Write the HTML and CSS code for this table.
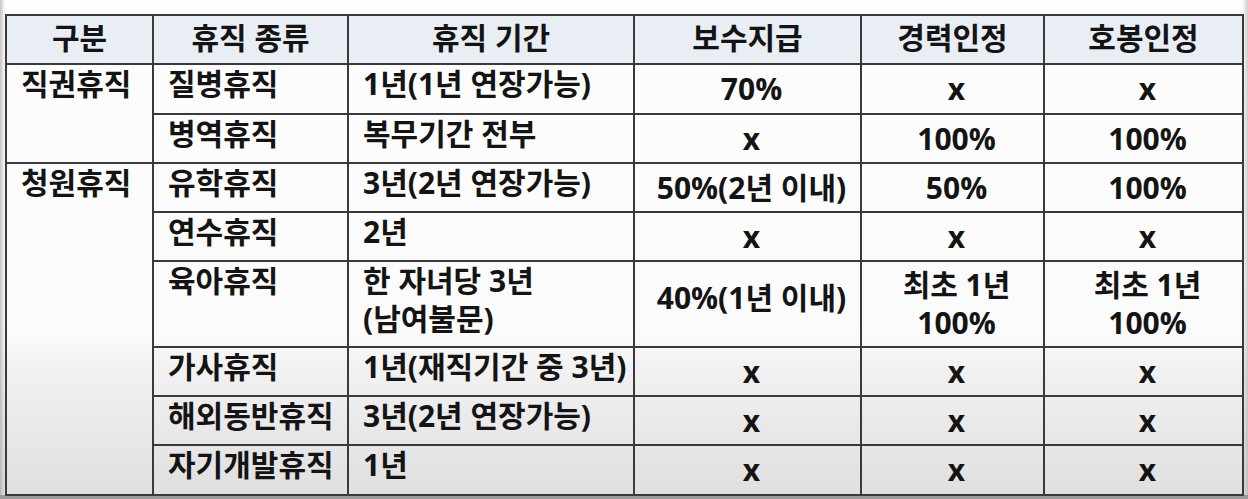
FILE: index.html
```html
<!DOCTYPE html>
<html lang="ko">
<head>
<meta charset="utf-8">
<link rel="stylesheet" href="styles.css">
</head>
<body>
<table class="leave">
  <colgroup>
    <col class="c1"><col class="c2"><col class="c3"><col class="c4"><col class="c5"><col class="c6">
  </colgroup>
  <thead>
    <tr class="r-h">
      <th>구분</th><th>휴직 종류</th><th>휴직 기간</th><th>보수지급</th><th>경력인정</th><th>호봉인정</th>
    </tr>
  </thead>
  <tbody>
    <tr class="r50">
      <td class="cat" rowspan="2">직권휴직</td><td class="name">질병휴직</td><td class="term">1년(1년 연장가능)</td><td class="val">70%</td><td class="val">x</td><td class="val">x</td>
    </tr>
    <tr class="r49">
      <td class="name">병역휴직</td><td class="term">복무기간 전부</td><td class="val">x</td><td class="val">100%</td><td class="val">100%</td>
    </tr>
    <tr class="r49">
      <td class="cat" rowspan="7">청원휴직</td><td class="name">유학휴직</td><td class="term">3년(2년 연장가능)</td><td class="val">50%(2년 이내)</td><td class="val">50%</td><td class="val">100%</td>
    </tr>
    <tr class="r49">
      <td class="name">연수휴직</td><td class="term">2년</td><td class="val">x</td><td class="val">x</td><td class="val">x</td>
    </tr>
    <tr class="r86">
      <td class="name">육아휴직</td><td class="term">한 자녀당 3년<br>(남여불문)</td><td class="val raised">40%(1년 이내)</td><td class="val">최초 1년<br>100%</td><td class="val">최초 1년<br>100%</td>
    </tr>
    <tr class="r49">
      <td class="name">가사휴직</td><td class="term">1년(재직기간 중 3년)</td><td class="val">x</td><td class="val">x</td><td class="val">x</td>
    </tr>
    <tr class="r49">
      <td class="name">해외동반휴직</td><td class="term">3년(2년 연장가능)</td><td class="val">x</td><td class="val">x</td><td class="val">x</td>
    </tr>
    <tr class="r50">
      <td class="name">자기개발휴직</td><td class="term">1년</td><td class="val">x</td><td class="val">x</td><td class="val">x</td>
    </tr>
  </tbody>
</table>
</body>
</html>
```

FILE: styles.css
```css
html, body {
  margin: 0;
  height: 499px;
  overflow: hidden;
}
body {
  box-sizing: border-box;
  padding: 14px 6px 0 5px;
  font-family: "Open Sans", "Noto Sans CJK KR", sans-serif;
  color: #141414;
  background:
    linear-gradient(to bottom, transparent 495px, #9c9c9c 495px),
    linear-gradient(to right, rgba(150,150,150,0.55) 0, rgba(200,200,200,0.2) 4px, transparent 6px),
    linear-gradient(to left, rgba(150,150,150,0.45) 0, transparent 6px),
    linear-gradient(to bottom, #fdfdfd 0, #fbfbfb 330px, #f1f1f1 370px, #dfdfdf 499px);
}
.leave {
  border-collapse: collapse;
  table-layout: fixed;
  width: 1237px;
  font-size: 30px;
  font-weight: 700;
  letter-spacing: 0;
  line-height: 38px;
}
.c1 { width: 147px; }
.c2 { width: 195px; }
.c3 { width: 286px; }
.c4 { width: 227px; }
.c5 { width: 183px; }
.c6 { width: 199px; }

.leave th, .leave td {
  border: 2px solid #3a3a3a;
  padding: 0 6px 0 14px;
  white-space: nowrap;
  overflow: hidden;
}
.leave th {
  background: #e9edf4;
  text-align: center;
  vertical-align: middle;
  font-weight: 700;
  padding: 0 4px 3px;
}
.r-h { height: 49px; }
.r50 { height: 50px; }
.r49 { height: 49px; }
.r86 { height: 86px; }

.cat, .name, .term {
  text-align: left;
  vertical-align: top;
  padding-top: 8px;
}
.cat { padding-left: 15px; }
.name { padding-left: 13px; }
.term { padding-left: 13px; }
.val {
  text-align: center;
  vertical-align: middle;
  padding: 0 4px 5px;
}
.val.raised { padding-bottom: 12px; }
```
